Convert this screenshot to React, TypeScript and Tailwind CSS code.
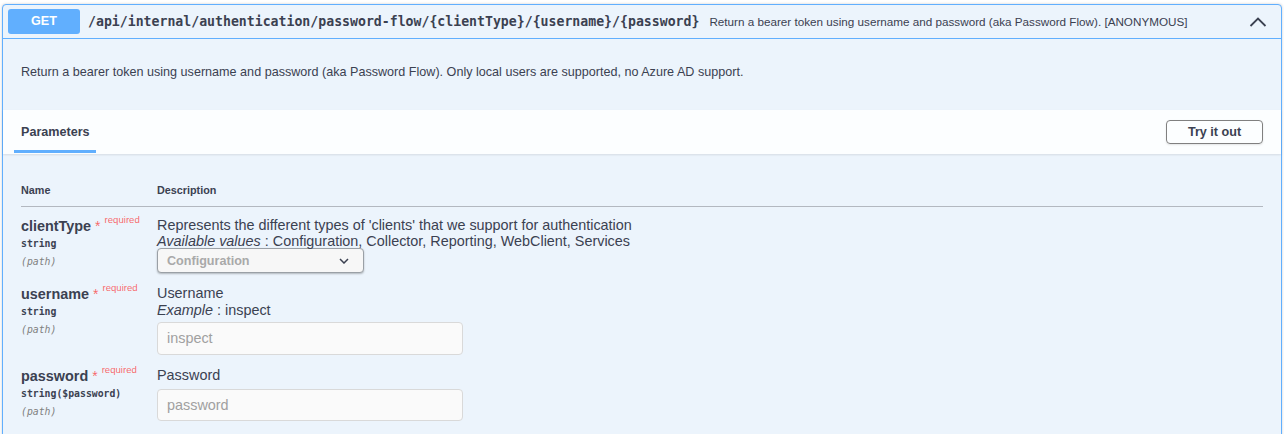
import React from "react";

const sans = { fontFamily: '"Liberation Sans", Arial, sans-serif' };

function ParamName({ name, type }: { name: string; type: string }) {
  return (
    <div className="w-[136px] shrink-0">
      <div className="flex items-start h-[18px]">
        <span className="text-[14.4px] font-bold leading-[18px] text-[#3b4151]">{name}</span>
        <span className="text-[14px] leading-[18px] text-[rgba(255,0,0,0.6)] ml-[4px]">*</span>
        <span className="text-[9.6px] leading-[10px] text-[rgba(255,0,0,0.6)] ml-[4px] -mt-[2px]">required</span>
      </div>
      <div
        className="text-[9.8px] font-semibold leading-[18px] text-[#3b4151]"
        style={{ fontFamily: '"DejaVu Sans Mono", monospace' }}
      >
        {type}
      </div>
      <div
        className="text-[9.8px] italic leading-[18px] text-[#808080]"
        style={{ fontFamily: '"DejaVu Sans Mono", monospace' }}
      >
        (path)
      </div>
    </div>
  );
}

export default function App() {
  return (
    <div className="min-h-screen bg-white pt-[4px] px-[2px] text-[#3b4151]" style={sans}>
      <div className="rounded-[4px] border border-[#61affe] bg-[#ecf4fc] shadow-[0_0_3px_rgba(0,0,0,0.19)] pb-[40px]">
        {/* summary */}
        <div className="flex items-center h-[34px] px-[5px] border-b border-[#61affe]">
          <div className="w-[72px] h-[25px] rounded-[3px] bg-[#61affe] text-white font-bold text-[12.6px] flex items-center justify-center">
            GET
          </div>
          <div
            className="ml-[8px] text-[13.2px] font-semibold text-[#3b4151] whitespace-nowrap"
            style={{ fontFamily: '"DejaVu Sans Mono", monospace' }}
          >
            /api/internal/authentication/password-flow/{"{clientType}"}/{"{username}"}/{"{password}"}
          </div>
          <div className="ml-[10px] text-[11.7px] text-[#3b4151] whitespace-nowrap flex-1">
            Return a bearer token using username and password (aka Password Flow). [ANONYMOUS]
          </div>
          <svg width="18" height="18" viewBox="0 0 18 18" className="mr-[9px]">
            <polyline points="1.5,13 9,5.5 16.5,13" fill="none" stroke="#3b4151" strokeWidth="1.8" />
          </svg>
        </div>

        {/* description */}
        <div className="h-[71px] px-[18px] pt-[26px]">
          <p className="text-[12.6px] leading-[14px] text-[#3b4151]">
            Return a bearer token using username and password (aka Password Flow). Only local users are supported, no Azure AD support.
          </p>
        </div>

        {/* section header */}
        <div className="h-[44px] bg-[rgba(255,255,255,0.85)] shadow-[0_1px_2px_rgba(0,0,0,0.1)] flex items-center justify-between pl-[18px] pr-[18px]">
          <div className="relative h-full flex items-center">
            <span className="text-[12.6px] font-bold text-[#3b4151]">Parameters</span>
            <div className="absolute left-[-7px] right-[-6px] bottom-[1px] h-[3px] bg-[#61affe]" />
          </div>
          <button className="w-[97px] h-[24px] rounded-[4px] border border-[#808080] text-[12.6px] font-bold text-[#3b4151] shadow-[0_1px_2px_rgba(0,0,0,0.1)] bg-transparent">
            Try it out
          </button>
        </div>

        {/* table */}
        <div className="px-[18px] pt-[28px]">
          <div className="flex h-[25px] border-b border-[#b3b8c0] text-[10.8px] font-bold text-[#3b4151]">
            <div className="w-[136px]">Name</div>
            <div>Description</div>
          </div>

          {/* row 1 */}
          <div className="flex pt-[10px]">
            <ParamName name="clientType" type="string" />
            <div className="text-[14.4px] leading-[16px] text-[#3b4151]">
              <div>Represents the different types of 'clients' that we support for authentication</div>
              <div>
                <i>Available values</i> : Configuration, Collector, Reporting, WebClient, Services
              </div>
              <div className="-mt-[1px] w-[207px] h-[25px] rounded-[4px] border border-[#9aa0a6] bg-[#f7f7f7] shadow-[0_1px_2px_rgba(0,0,0,0.25)] flex items-center justify-between pl-[9px] pr-[14px]">
                <span className="text-[12.6px] font-bold text-[#a9a9a9]">Configuration</span>
                <svg width="10" height="6" viewBox="0 0 10 6">
                  <polyline points="1,1 5,5 9,1" fill="none" stroke="#3b4151" strokeWidth="1.5" />
                </svg>
              </div>
            </div>
          </div>

          {/* row 2 */}
          <div className="flex pt-[12px]">
            <ParamName name="username" type="string" />
            <div className="text-[14.4px] leading-[17px] text-[#3b4151]">
              <div>Username</div>
              <div>
                <i>Example</i> : inspect
              </div>
              <div className="mt-[3px] w-[306px] h-[33px] rounded-[4px] border border-[#d9d9d9] bg-[#fafafa] flex items-center pl-[9px]">
                <span className="text-[14.4px] text-[#a0a0a0]">inspect</span>
              </div>
            </div>
          </div>

          {/* row 3 */}
          <div className="flex pt-[12px]">
            <ParamName name="password" type="string($password)" />
            <div className="text-[14.4px] leading-[17px] text-[#3b4151]">
              <div>Password</div>
              <div className="mt-[5px] w-[306px] h-[32px] rounded-[4px] border border-[#d9d9d9] bg-[#fafafa] flex items-center pl-[9px]">
                <span className="text-[14.4px] text-[#a0a0a0]">password</span>
              </div>
            </div>
          </div>
        </div>
      </div>
    </div>
  );
}
